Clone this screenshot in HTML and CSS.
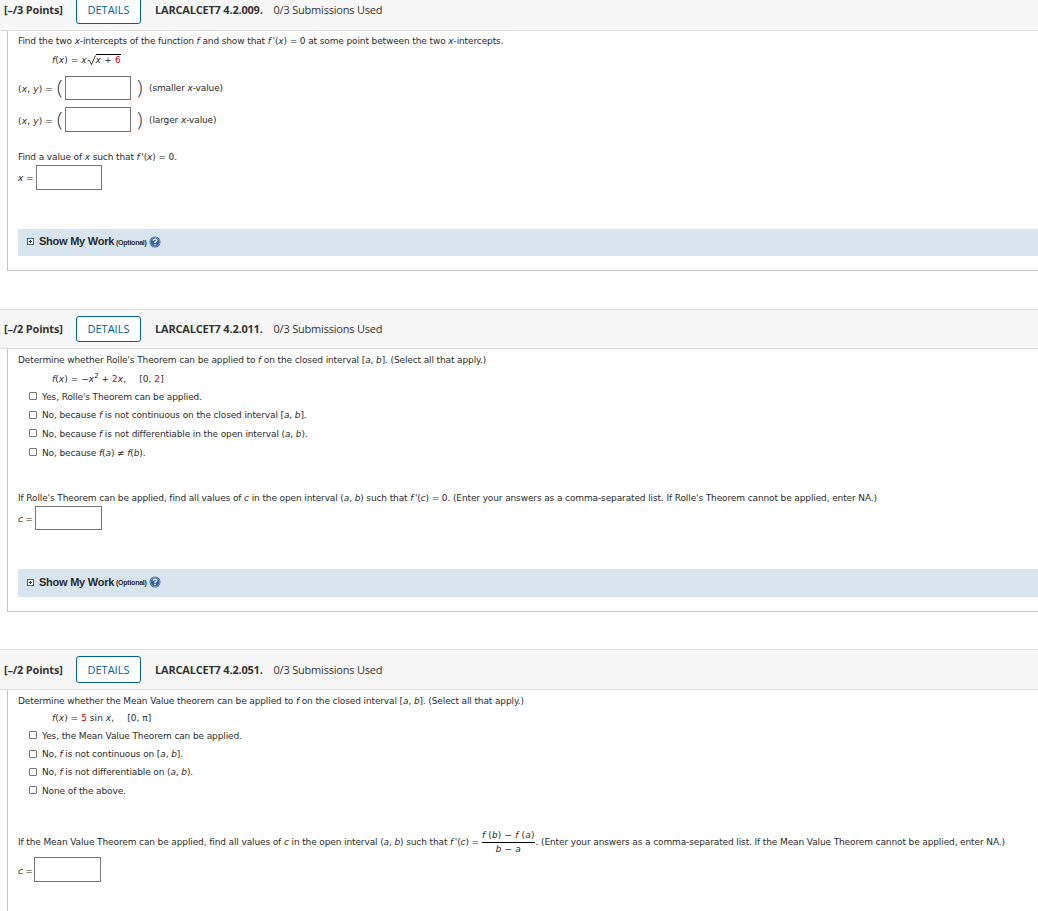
FILE: index.html
```html
<!DOCTYPE html>
<html>

<head>
    <meta charset="utf-8">
    <title>Homework 4.2</title>
    <link rel="stylesheet" href="styles.css">
</head>

<body>
    <div class="question">
        <div class="header header-first">
            <span class="points">[–/3 Points]</span>
            <button class="details">DETAILS</button>
            <span class="name">LARCALCET7 4.2.009.</span>
            <span class="used">0/3 Submissions Used</span>
        </div>
        <div class="content content-first">
            <p class="line"><span>Find the two <i>x</i>-intercepts of the function <i>f</i> and show that <i>f&thinsp;'</i>(<i>x</i>) = 0 at some point between the two <i>x</i>-intercepts.</span></p>
            <p class="line formula"><span><i>f</i>(<i>x</i>) = <i>x</i></span><svg class="root" width="9" height="11" viewBox="0 0 9 11"><path d="M0.5 6 L2 5 L4.5 9.5 L8.5 0.5" fill="none" stroke="#222" stroke-width="0.9"/></svg><span class="radicand"><i>x</i> + <b class="num">6</b></span></p>
            <div class="pair">
                <span class="lhs">(<i>x</i>, <i>y</i>) =</span><span class="paren">(</span><input class="box"><span class="paren right">)</span><span>(smaller <i>x</i>-value)</span>
            </div>
            <div class="pair larger">
                <span class="lhs">(<i>x</i>, <i>y</i>) =</span><span class="paren">(</span><input class="box"><span class="paren right">)</span><span>(larger <i>x</i>-value)</span>
            </div>
            <p class="line find"><span>Find a value of <i>x</i> such that <i>f&thinsp;'</i>(<i>x</i>) = 0.</span></p>
            <div class="answer"><span class="var"><i>x</i> =</span><input class="box"></div>
            <div class="work">
                <span class="plus"></span><b>Show My Work</b><small>(Optional)</small>
                <svg class="help" width="12" height="12" viewBox="0 0 12 12"><circle cx="6" cy="6" r="5.5" fill="#3560a0"/><circle cx="6" cy="6" r="4.6" fill="none" stroke="#90add5" stroke-width="0.7"/><path d="M4.3 4.7 Q4.3 3.2 6 3.2 Q7.8 3.2 7.8 4.6 Q7.8 5.5 6 6.2 V7.2 M6 8 V9.3" fill="none" stroke="#fff" stroke-width="1.3"/></svg>
            </div>
        </div>
    </div>

    <div class="question">
        <div class="header header-second">
            <span class="points">[–/2 Points]</span>
            <button class="details">DETAILS</button>
            <span class="name">LARCALCET7 4.2.011.</span>
            <span class="used">0/3 Submissions Used</span>
        </div>
        <div class="content content-second">
            <p class="line"><span>Determine whether Rolle's Theorem can be applied to <i>f</i> on the closed interval [<i>a</i>, <i>b</i>]. (Select all that apply.)</span></p>
            <p class="line formula"><span><i>f</i>(<i>x</i>) = −<i>x</i><sup>2</sup> + <b class="num">2</b><i>x</i>,</span><span class="domain">[0, <b class="num">2</b>]</span></p>
            <label class="choice"><input type="checkbox" class="check">Yes, Rolle's Theorem can be applied.</label>
            <label class="choice"><input type="checkbox" class="check"><span>No, because <i>f</i> is not continuous on the closed interval [<i>a</i>, <i>b</i>].</span></label>
            <label class="choice"><input type="checkbox" class="check"><span>No, because <i>f</i> is not differentiable in the open interval (<i>a</i>, <i>b</i>).</span></label>
            <label class="choice"><input type="checkbox" class="check"><span>No, because <i>f</i>(<i>a</i>) ≠ <i>f</i>(<i>b</i>).</span></label>
            <p class="line follow"><span>If Rolle's Theorem can be applied, find all values of <i>c</i> in the open interval (<i>a</i>, <i>b</i>) such that <i>f&thinsp;'</i>(<i>c</i>) = 0. (Enter your answers as a comma-separated list. If Rolle's Theorem cannot be applied, enter NA.)</span></p>
            <div class="answer answer-second"><span class="var"><i>c</i> =</span><input class="box"></div>
            <div class="work work-second">
                <span class="plus"></span><b>Show My Work</b><small>(Optional)</small>
                <svg class="help" width="12" height="12" viewBox="0 0 12 12"><circle cx="6" cy="6" r="5.5" fill="#3560a0"/><circle cx="6" cy="6" r="4.6" fill="none" stroke="#90add5" stroke-width="0.7"/><path d="M4.3 4.7 Q4.3 3.2 6 3.2 Q7.8 3.2 7.8 4.6 Q7.8 5.5 6 6.2 V7.2 M6 8 V9.3" fill="none" stroke="#fff" stroke-width="1.3"/></svg>
            </div>
        </div>
    </div>

    <div class="question">
        <div class="header header-third">
            <span class="points">[–/2 Points]</span>
            <button class="details">DETAILS</button>
            <span class="name">LARCALCET7 4.2.051.</span>
            <span class="used">0/3 Submissions Used</span>
        </div>
        <div class="content content-third">
            <p class="line"><span>Determine whether the Mean Value theorem can be applied to <i>f</i> on the closed interval [<i>a</i>, <i>b</i>]. (Select all that apply.)</span></p>
            <p class="line formula formula-sin"><span><i>f</i>(<i>x</i>) = <b class="num">5</b> sin <i>x</i>,</span><span class="domain">[0, π]</span></p>
            <label class="choice"><input type="checkbox" class="check">Yes, the Mean Value Theorem can be applied.</label>
            <label class="choice"><input type="checkbox" class="check"><span>No, <i>f</i> is not continuous on [<i>a</i>, <i>b</i>].</span></label>
            <label class="choice"><input type="checkbox" class="check"><span>No, <i>f</i> is not differentiable on (<i>a</i>, <i>b</i>).</span></label>
            <label class="choice"><input type="checkbox" class="check">None of the above.</label>
            <div class="line mean"><span>If the Mean Value Theorem can be applied, find all values of <i>c</i> in the open interval (<i>a</i>, <i>b</i>) such that <i>f&thinsp;'</i>(<i>c</i>) =</span><span class="fraction"><span class="top"><i>f</i> (<i>b</i>) − <i>f</i> (<i>a</i>)</span><span><i>b</i> − <i>a</i></span></span><span>. (Enter your answers as a comma-separated list. If the Mean Value Theorem cannot be applied, enter NA.)</span></div>
            <div class="answer answer-third"><span class="var"><i>c</i> =</span><input class="box"></div>
        </div>
    </div>
</body>

</html>
```

FILE: styles.css
```css
* {
    box-sizing: border-box;
}

html {
    overflow: hidden;
}

body {
    margin: -9px 0 0;
    height: 920px;
    overflow: hidden;
    background-color: white;
    color: #2b2b2b;
    font-family: "DejaVu Sans", Verdana, sans-serif;
    font-size: 9px;
    letter-spacing: -0.12px;
    white-space: nowrap;
}

.header {
    display: flex;
    align-items: center;
    height: 40px;
    padding-left: 4px;
    background-color: #f7f7f7;
    border-top: 1px solid #dedede;
    border-bottom: 1px solid #dedede;
    color: #333;
    font-family: "Open Sans", sans-serif;
    font-size: 11px;
    letter-spacing: -0.2px;
}

.header-first {
    padding-bottom: 3px;
}

.header-second {
    padding-bottom: 1px;
}

.header-third {
    height: 41px;
}

.points {
    width: 72px;
    font-weight: bold;
}

.details {
    width: 65px;
    height: 27px;
    margin-right: 14px;
    padding: 0;
    background-color: white;
    border: 1px solid #00609c;
    border-radius: 3px;
    color: #00609c;
    font-family: "Open Sans", sans-serif;
    font-size: 11px;
    font-weight: 500;
}

.header-first .details {
    margin-top: 1px;
    padding-bottom: 2px;
}

.header-second .details {
    height: 26px;
}

.name {
    width: 118.5px;
    font-weight: bold;
}

.content {
    margin-left: 7px;
    padding-left: 10px;
    border-left: 1px solid #c4c4c4;
    border-bottom: 1px solid #c4c4c4;
}

.content-first {
    height: 240px;
    margin-bottom: 38px;
}

.content-second {
    height: 263px;
    margin-bottom: 37px;
}

.content-third {
    height: 240px;
}

.line {
    display: flex;
    align-items: center;
    height: 20px;
    margin: 0;
}

.content-second .line,
.content-third .line {
    padding-top: 1px;
}

.formula {
    height: 18px;
    padding-left: 34px;
    letter-spacing: 0.05px;
}

.content-third .formula-sin {
    height: 16px;
    padding-top: 0;
    padding-bottom: 1px;
}

.num {
    color: #e00000;
    font-weight: normal;
}

.radicand {
    border-top: 1px solid black;
    line-height: 11px;
    letter-spacing: 0.2px;
}

sup {
    font-size: 7px;
    line-height: 0;
}

.domain {
    margin-left: 13px;
}

.pair {
    display: flex;
    align-items: center;
    height: 32px;
}

.formula + .pair {
    margin-top: 3px;
}

.formula + .pair .box {
    height: 24px;
}

.larger {
    height: 31px;
}

.lhs {
    width: 39px;
    padding-top: 2px;
    letter-spacing: 0.15px;
}

.paren {
    width: 8px;
    font-size: 20px;
    font-weight: 300;
    font-family: "Open Sans", sans-serif;
    line-height: 24px;
}

.right {
    margin-left: 6px;
    width: 12px;
}

.box {
    width: 66px;
    height: 25px;
    margin: 0;
    padding: 0;
    background-color: white;
    border: 1px solid #767676;
}

.find {
    height: 16px;
    margin-top: 14px;
}

.answer {
    display: flex;
    align-items: center;
    height: 25px;
}

.answer-second {
    height: 24px;
    margin-top: -1px;
}

.answer-third {
    margin-top: 5px;
}

.var {
    width: 18px;
}

.answer-second .var {
    width: 17px;
    padding-top: 2px;
}

.answer-third .var {
    width: 16px;
    padding-top: 3px;
}

.answer-second .box,
.answer-third .box {
    width: 67px;
}

.answer-second .box {
    height: 24px;
}

.work {
    display: flex;
    align-items: center;
    height: 27px;
    margin-top: 39px;
    padding-left: 9px;
    padding-bottom: 2px;
    background-color: #d9e5ee;
    font-family: Arial, "Liberation Sans", sans-serif;
    font-size: 11px;
    letter-spacing: -0.25px;
}

.work b {
    margin-top: -1px;
}

.work-second {
    height: 28px;
}

.work small {
    margin: 1px 2px 0;
    font-size: 7px;
    font-weight: bold;
}

.plus {
    width: 7px;
    height: 7px;
    margin-right: 5px;
    border: 1px solid #3b6796;
    background: linear-gradient(#234, #234) center / 3px 1px no-repeat, linear-gradient(#234, #234) center / 1px 3px no-repeat, white;
}

.choice {
    display: flex;
    align-items: center;
    height: 18.6px;
    padding-top: 1px;
    padding-left: 11px;
}

.content-third .choice {
    height: 18.4px;
}

.check {
    appearance: none;
    width: 8px;
    height: 8px;
    margin: -1px 5px 0 0;
    border: 1px solid #767676;
    border-radius: 1px;
    background-color: white;
}

.follow {
    margin-top: 26px;
}

.mean {
    margin-top: 32px;
}

.content-third .mean {
    padding-top: 0;
}

.fraction {
    display: flex;
    flex-direction: column;
    align-items: center;
    margin: 2px 1px 0 3px;
    line-height: 13px;
    letter-spacing: 0.15px;
}

.top {
    border-bottom: 1px solid black;
}
```
